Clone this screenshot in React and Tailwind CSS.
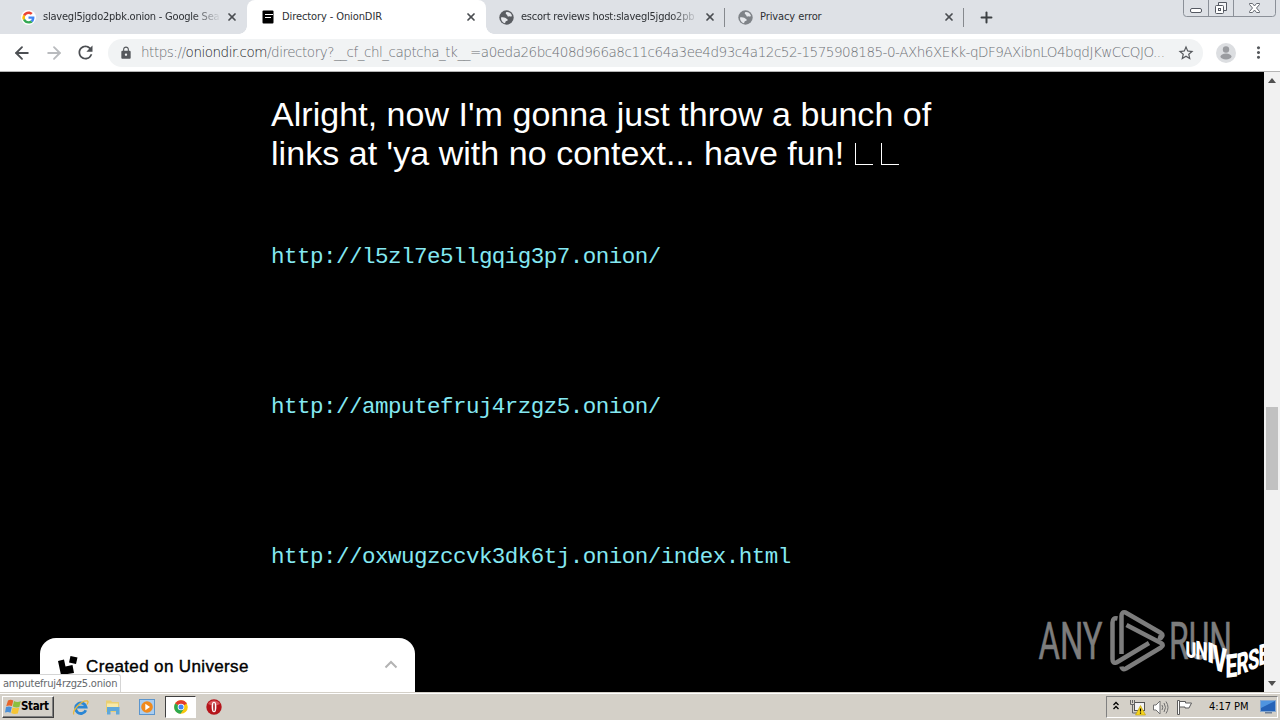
import { ArrowLeft, ArrowRight, Plus, X } from "lucide-react";
import { MdLock, MdRefresh, MdStarBorder, MdMoreVert } from "react-icons/md";

const uiFont = "font-['DejaVu_Sans_Condensed','DejaVu_Sans',sans-serif]";

function GoogleIcon() {
  return (
    <svg className="size-[15px]" viewBox="0 0 48 48">
      <path fill="#fff" d="M24 0a24 24 0 1 0 0 48 24 24 0 0 0 0-48z" />
      <path fill="#ea4335" d="M24 12.5c3 0 5.6 1 7.700 3l5.700-5.700C34 6.600 29.400 4.500 24 4.500c-7.600 0-14.200 4.400-17.400 10.700l6.600 5.100c1.600-4.600 5.800-7.800 10.800-7.800z" />
      <path fill="#4285f4" d="M43 24.400c0-1.400-.1-2.700-.4-3.900H24v7.600h10.700c-.5 2.500-1.900 4.600-4 6l6.300 4.900c3.800-3.500 6-8.600 6-14.600z" />
      <path fill="#fbbc05" d="M13.200 27.700a11.700 11.700 0 0 1 0-7.400l-6.600-5.100a19.500 19.500 0 0 0 0 17.600z" />
      <path fill="#34a853" d="M24 43.500c5.300 0 9.700-1.700 13-4.700l-6.300-4.900c-1.800 1.200-4 1.900-6.700 1.900-5 0-9.200-3.400-10.800-8l-6.600 5c3.200 6.300 9.800 10.700 17.400 10.700z" />
    </svg>
  );
}

function DirectoryIcon() {
  return (
    <svg className="size-[14px]" viewBox="0 0 14 14">
      <rect x="1.500" y=".5" width="11" height="13" rx="1" fill="#000" />
      <path d="M4 4.500h8M4 7.500h6" stroke="#fff" strokeWidth="1.200" />
    </svg>
  );
}

function GlobeIcon({ color }) {
  return (
    <svg className="size-[15px]" viewBox="0 0 15 15">
      <circle cx="7.500" cy="7.500" r="7.200" fill={color} />
      <path d="M2 8c0-1 1.500-.6 3-.5 2 .1 2.300 1.200 3.300 1.700 1 .4.400 1.600-.8 1.700-1.300.2-.8 1.700-1.800 2.400C3.500 12.500 2 10.500 2 8z" fill="#e6e8ec" />
      <path d="M7.500 2c2-.3 4.500 1 5.300 3.200.3 1.300-.7 1.700-1.700 1.200-.9-.5-1.500.5-2.300 0C8 5.800 8.500 5 7.500 4.600 6.500 4.200 6.500 2.400 7.500 2z" fill="#e6e8ec" />
    </svg>
  );
}

const tabs = [
  { title: "slavegl5jgdo2pbk.onion - Google Sea", icon: <GoogleIcon />, faded: true },
  { title: "Directory - OnionDIR", icon: <DirectoryIcon />, active: true },
  { title: "escort reviews host:slavegl5jgdo2pb", icon: <GlobeIcon color="#5a5d62" />, faded: true, separator: true },
  { title: "Privacy error", icon: <GlobeIcon color="#7f8388" />, separator: true },
];

function Tab({ tab }) {
  return (
    <div className={`relative flex h-[34px] w-[239px] shrink-0 items-center pl-[13px] ${tab.active ? "rounded-t-lg bg-white" : ""}`}>
      {tab.active && (
        <>
          <span className="absolute bottom-0 -left-2 size-2 bg-[radial-gradient(circle_at_0_0,#dee1e6_7.500px,#fff_8px)]" />
          <span className="absolute -right-2 bottom-0 size-2 bg-[radial-gradient(circle_at_100%_0,#dee1e6_7.500px,#fff_8px)]" />
        </>
      )}
      <span className="flex w-[15px] shrink-0 justify-center">{tab.icon}</span>
      <span className={`ml-[7px] w-[177px] whitespace-nowrap pt-px text-[11px] text-[#2d3034] ${uiFont} ${tab.faded ? "tracking-[-0.220px] [mask-image:linear-gradient(to_right,#000_150px,transparent_178px)]" : "tracking-[-0.100px]"}`}>
        {tab.title}
      </span>
      <X className="ml-[6px] size-[12px] shrink-0 text-[#4a4d51]" strokeWidth={3.5} />
      {tab.separator && <span className="absolute top-[8px] right-0 h-[19px] w-px bg-[#86898e]" />}
    </div>
  );
}

function WindowControls() {
  return (
    <svg className="mr-[4px] ml-auto h-[17px] w-[93px]" viewBox="0 0 93 17" fill="none">
      <path d="M.5 0v13.500a3 3 0 0 0 3 3h86a3 3 0 0 0 3-3V0M25.500 0v16M50.500 0v16" stroke="#8b9098" />
      <rect x="7.500" y="8.500" width="11" height="4" rx="1.500" fill="#fff" stroke="#555962" />
      <path d="M35.500 5.500v-3h8v8h-3" stroke="#555962" fill="#f4f5f7" />
      <rect x="32.500" y="5.500" width="8" height="8" rx="1" fill="#fff" stroke="#555962" />
      <rect x="35.500" y="8.500" width="2" height="2" stroke="#555962" />
      <path d="M66.500 3.500h3l2 2.500 2-2.500h3v1l-3 3.500 3 3.500v1h-3l-2-2.500-2 2.500h-3v-1l3-3.500-3-3.500z" fill="#fff" stroke="#666a72" />
    </svg>
  );
}

function Toolbar() {
  return (
    <div className="flex h-[38px] shrink-0 items-center border-b border-[#b4b4b4] bg-white">
      <ArrowLeft className="ml-[12px] size-[20px] text-[#4c4f53]" strokeWidth={2.200} />
      <ArrowRight className="ml-[12px] size-[20px] text-[#b9bbbe]" strokeWidth={2.200} />
      <MdRefresh className="ml-[11px] size-[21px] text-[#4c4f53]" />
      <div className="ml-[12px] flex h-[28px] w-[1095px] items-center rounded-full bg-[#f1f3f4]">
        <MdLock className="ml-[11px] size-[14px] shrink-0 text-[#55585c]" />
        <span className="ml-[8px] w-[1030px] shrink-0 text-[13.500px] font-extralight tracking-[-0.475px] whitespace-nowrap text-[#6d7074] font-['DejaVu_Sans',sans-serif]">
          https://<span className="text-[#202124]">oniondir.com</span>/directory?__cf_chl_captcha_tk__=a0eda26bc408d966a8c11c64a3ee4d93c4a12c52-1575908185-0-AXh6XEKk-qDF9AXibnLO4bqdJKwCCQJO...
        </span>
        <MdStarBorder className="ml-[6px] size-[18px] shrink-0 text-[#55585c]" />
      </div>
      <svg className="ml-[13px] size-[20px]" viewBox="0 0 20 20">
        <circle cx="10" cy="10" r="10" fill="#dcdee1" />
        <circle cx="10" cy="6.500" r="3.200" fill="#9a9ca0" />
        <ellipse cx="10" cy="13.500" rx="5.500" ry="3" fill="#9a9ca0" />
      </svg>
      <MdMoreVert className="ml-[13px] size-[19px] text-[#55585c]" />
    </div>
  );
}

function AnyRunMark() {
  return (
    <svg className="absolute right-[17px] bottom-[14px] h-[76px] w-[220px]" viewBox="1027 602 220 76" fill="none">
      <g fill="#7d7d7d" stroke="#7d7d7d" strokeWidth=".6" fontFamily="Roboto, sans-serif" fontSize="52">
        <text x="1038.500" y="659" textLength="64" lengthAdjust="spacingAndGlyphs">ANY</text>
        <text x="1169" y="659" textLength="63" lengthAdjust="spacingAndGlyphs">RUN</text>
      </g>
      <g stroke="#7d7d7d" strokeWidth="4.500" strokeLinejoin="round">
        <path d="M1117.500 618.500q-5-1-5 4V659q0 5 4 3.500L1149 643" />
        <path d="M1121.500 654V616q0-4.500 4-3.500L1161 633q3 2 0 5l-3-1" />
        <path d="M1126.500 625L1161 643q3.500 2 0 4.500L1126 668.500q-4 2-4.500-2" />
      </g>
    </svg>
  );
}

const universeLetters = [
  { c: "U", t: "translate(1185.5 657) skewY(7) scale(.6 .82)" },
  { c: "N", t: "translate(1195.5 658.5) skewY(10) scale(.64 .94)" },
  { c: "I", t: "translate(1207 661.5) skewY(20) scale(.9 1.05)" },
  { c: "V", t: "translate(1212.5 669) skewY(20) scale(.8 1.3)" },
  { c: "E", t: "translate(1225.5 678) skewY(-8) scale(.78 1.2)" },
  { c: "R", t: "translate(1236.5 675.5) skewY(-18) scale(.7 1.12)" },
  { c: "S", t: "translate(1248 671) skewY(-18) scale(.68 1.05)" },
  { c: "E", t: "translate(1258.5 666) skewY(-16) scale(.7 1.08)" },
];

function UniverseBadge() {
  return (
    <svg className="absolute right-0 bottom-[8px] h-[50px] w-[82px]" viewBox="1182 634 82 50">
      <g fill="#fff" fontFamily="Roboto, sans-serif" fontWeight="900" fontSize="27">
        {universeLetters.map(({ c, t }, i) => (
          <text key={i} transform={t}>{c}</text>
        ))}
      </g>
    </svg>
  );
}

const links = [
  "http://l5zl7e5llgqig3p7.onion/",
  "http://amputefruj4rzgz5.onion/",
  "http://oxwugzccvk3dk6tj.onion/index.html",
];

function Page() {
  return (
    <main className="relative flex-1 overflow-hidden bg-black pl-[271px]">
      <h1 className="pt-[23px] text-[34px] leading-[39px] tracking-[0.040px] whitespace-nowrap text-white font-['Liberation_Sans',Arial,sans-serif]">
        Alright, now I&apos;m gonna just throw a bunch of
        <br />
        links at &apos;ya with no context... have fun!
        <span className="ml-[11px] inline-block h-[22px] w-[18px] border-b border-l border-white" />
        <span className="ml-[8px] inline-block h-[22px] w-[18px] border-b border-l border-white" />
      </h1>
      <div className="mt-[69px] flex flex-col gap-[120px]">
        {links.map((link) => (
          <a key={link} href={link} className="text-[22.500px] leading-[30px] tracking-[-0.510px] text-[#84e8f2] font-['Liberation_Mono',monospace]">
            {link}
          </a>
        ))}
      </div>
      <AnyRunMark />
      <UniverseBadge />
      <div className="absolute bottom-0 left-[40px] flex h-[54px] w-[375px] items-start rounded-t-[16px] bg-white pt-[17px] pl-[17px]">
        <svg className="size-[22px]" viewBox="0 0 22 22">
          <path d="M1 6l6-1.500 1.500 7 7-1.500 1.500 8-13 2z" />
          <path d="M13.500 1l7 1.500-1.500 6.500-7-1.500z" />
        </svg>
        <span className="ml-[7px] text-[17px] leading-[23px] tracking-[0.360px] whitespace-nowrap text-black font-['Liberation_Sans',Arial,sans-serif] [-webkit-text-stroke:0.400px_#000]">
          Created on Universe
        </span>
        <svg className="mt-[5px] mr-[17px] ml-auto h-[9px] w-[14px]" viewBox="0 0 14 9" fill="none">
          <path d="M1.500 7.500L7 2l5.500 5.500" stroke="#b3b3b3" strokeWidth="2" />
        </svg>
      </div>
      <div className={`absolute bottom-0 left-0 h-[18px] w-[121px] rounded-tr-[3px] border-t border-r border-[#d5d5d5] bg-white pl-[3px] text-[11px] leading-[17px] tracking-[-0.200px] whitespace-nowrap text-[#66696d] ${uiFont}`}>
        amputefruj4rzgz5.onion
      </div>
    </main>
  );
}

function Scrollbar() {
  return (
    <div className="flex w-[16px] shrink-0 flex-col items-center bg-[#f1f1f1]">
      <svg className="mt-[6px] h-[5px] w-[8px]" viewBox="0 0 8 5"><path d="M0 5l4-5 4 5z" fill="#505050" /></svg>
      <span className="mt-[324px] h-[83px] w-[12px] bg-[#c1c1c1]" />
      <svg className="mt-auto mb-[6px] h-[5px] w-[8px]" viewBox="0 0 8 5"><path d="M0 0l4 5 4-5z" fill="#505050" /></svg>
    </div>
  );
}

function StartButton() {
  return (
    <div className={`flex h-[22px] w-[52px] items-center border border-t-white border-r-[#404040] border-b-[#404040] border-l-white bg-[#d4d0c8] pl-[2px] text-black shadow-[inset_-1px_-1px_0_#808080] ${uiFont}`}>
      <svg className="size-[16px] shrink-0" viewBox="0 0 16 16">
        <path d="M3 1.500Q5.500 0 8.300 1.500L7 7Q4 6 1.200 7.200z" fill="#e8652a" />
        <path d="M9 2Q12.500 3.800 15.800 2l-1.400 6Q11 9 7.700 7.500z" fill="#8cbf3f" />
        <path d="M1 8Q4 6.800 6.800 8L5.500 13.800Q3 12.500 0 13.600z" fill="#4a8fd8" />
        <path d="M7.500 8.400Q10.500 9.800 14.200 8.800l-1.400 5.700Q9 15.500 6.200 14z" fill="#f6c535" />
      </svg>
      <span className="text-[11.500px] font-bold tracking-[-0.350px]">Start</span>
    </div>
  );
}

function Taskbar() {
  return (
    <footer className="flex h-[28px] shrink-0 items-center border-t border-[#d4d0c8] bg-[#d4d0c8] pt-[1px] pr-[2px] pl-[2px] shadow-[inset_0_1px_0_#fff]">
      <StartButton />
      <svg className="ml-[18px] size-[17px]" viewBox="0 0 17 17" fill="none">
        <path d="M13.800 11.200a5.300 5.300 0 1 1 .3-3H5" stroke="#2a86d4" strokeWidth="2.800" />
        <path d="M2 15.500C-1 13 9 1 15.500 2c1 .5.500 2-.5 3.500" stroke="#e9b83a" strokeWidth="1.300" />
      </svg>
      <svg className="ml-[16px] size-[16px]" viewBox="0 0 16 16">
        <path d="M1 1.500h5l1 1.500h7V13H1z" fill="#e9cf74" />
        <path d="M2 4.500h11V12H2z" fill="#f7e9a8" />
        <path d="M2 8h12.500v7.500H11V12H5.500v3.500H2z" fill="#5fa8da" />
      </svg>
      <svg className="ml-[18px] size-[16px]" viewBox="0 0 16 16">
        <rect x=".5" y=".5" width="15" height="15" fill="#a9cdf0" stroke="#5b95cd" />
        <circle cx="8" cy="8" r="5.800" fill="#f08a1d" />
        <path d="M6.300 4.800v6.400L11 8z" fill="#fff" />
      </svg>
      <div className="ml-[10px] flex h-[22px] w-[31px] items-center justify-center border border-t-[#404040] border-r-white border-b-white border-l-[#404040] bg-white">
        <svg className="size-[14px]" viewBox="0 0 14 14">
          <circle cx="7" cy="7" r="6.800" fill="#f9c80e" />
          <path d="M7 7L1.100 3.600A6.800 6.800 0 0 1 12.900 3.600z" fill="#e23b2e" />
          <path d="M7 7L1.100 3.600A6.800 6.800 0 0 0 6.500 13.800L10 8.700z" fill="#2da94f" />
          <circle cx="7" cy="7" r="3.300" fill="#fff" />
          <circle cx="7" cy="7" r="2.500" fill="#4285f4" />
        </svg>
      </div>
      <svg className="ml-[10px] size-[16px]" viewBox="0 0 16 16">
        <circle cx="8" cy="8" r="7.700" fill="#b5151b" />
        <path d="M2 5a7 7 0 0 1 12 0q-6 3-12 0z" fill="#d8565a" />
        <ellipse cx="8" cy="8" rx="2.400" ry="5.300" fill="#fff" />
        <ellipse cx="8" cy="8" rx=".8" ry="4.200" fill="#a5161b" />
      </svg>
      <div className="ml-auto flex h-[22px] w-[172px] items-center border border-t-[#808080] border-r-white border-b-white border-l-[#808080] pl-[5px]">
        <svg className="mb-[3px] h-[9px] w-[8px]" viewBox="0 0 8 9" fill="none" stroke="#000" strokeWidth="1.300">
          <path d="M1.500 4L4 1.500 6.500 4M1.500 8L4 5.500 6.500 8" />
        </svg>
        <svg className="ml-[9px] size-[17px]" viewBox="0 0 17 17">
          <rect x="5.500" y="3.500" width="10" height="8" fill="#f3f3f3" stroke="#555" />
          <path d="M1.500 1v4.500h4V1M3.500 1v3M3.500 5v9h5" fill="none" stroke="#666" />
          <path d="M11.500 6.500l5 9.500h-10z" fill="#f7d51d" stroke="#b99a10" strokeWidth=".6" />
          <path d="M11.500 9.500v3M11.500 13.500v1.200" stroke="#000" strokeWidth="1.200" />
        </svg>
        <svg className="ml-[6px] size-[17px]" viewBox="0 0 17 17" fill="none" stroke="#707070">
          <path d="M1.500 6v5H4l4 4V2L4 6z" fill="#fff" />
          <path d="M10 6q1.500 2.500 0 5M12 4q3 4.500 0 9M14 2.500q4 6 0 12" />
        </svg>
        <svg className="ml-[7px] size-[17px]" viewBox="0 0 17 17" fill="#fff" stroke="#5c5c5c">
          <path d="M1.500 1.500h2v14h-2zM3.500 2.500h6v1.500h6l-2.500 5h-4v-1h-5.500z" />
        </svg>
        <span className={`ml-[16px] text-[11px] tracking-[-0.050px] whitespace-nowrap text-black ${uiFont}`}>4:17 PM</span>
        <svg className="mr-[1px] ml-auto h-[14px] w-[16px]" viewBox="0 0 16 14">
          <rect x=".5" y=".5" width="15" height="11" fill="#2563b8" stroke="#86a8d0" />
          <path d="M1 1h14L1 8z" fill="#4f95e0" />
          <path d="M5 12h7v1.500H5z" fill="#6d7f96" />
        </svg>
      </div>
    </footer>
  );
}

export default function App() {
  return (
    <div className="flex h-[720px] w-[1280px] flex-col overflow-hidden">
      <header className="flex h-[34px] shrink-0 items-start bg-[#dee1e6] pl-[8px]">
        {tabs.map((tab) => (
          <Tab key={tab.title} tab={tab} />
        ))}
        <Plus className="mt-[9px] ml-[14px] size-[17px] text-[#3c4043]" strokeWidth={2.800} />
        <WindowControls />
      </header>
      <Toolbar />
      <div className="flex min-h-0 flex-1">
        <Page />
        <Scrollbar />
      </div>
      <Taskbar />
    </div>
  );
}
